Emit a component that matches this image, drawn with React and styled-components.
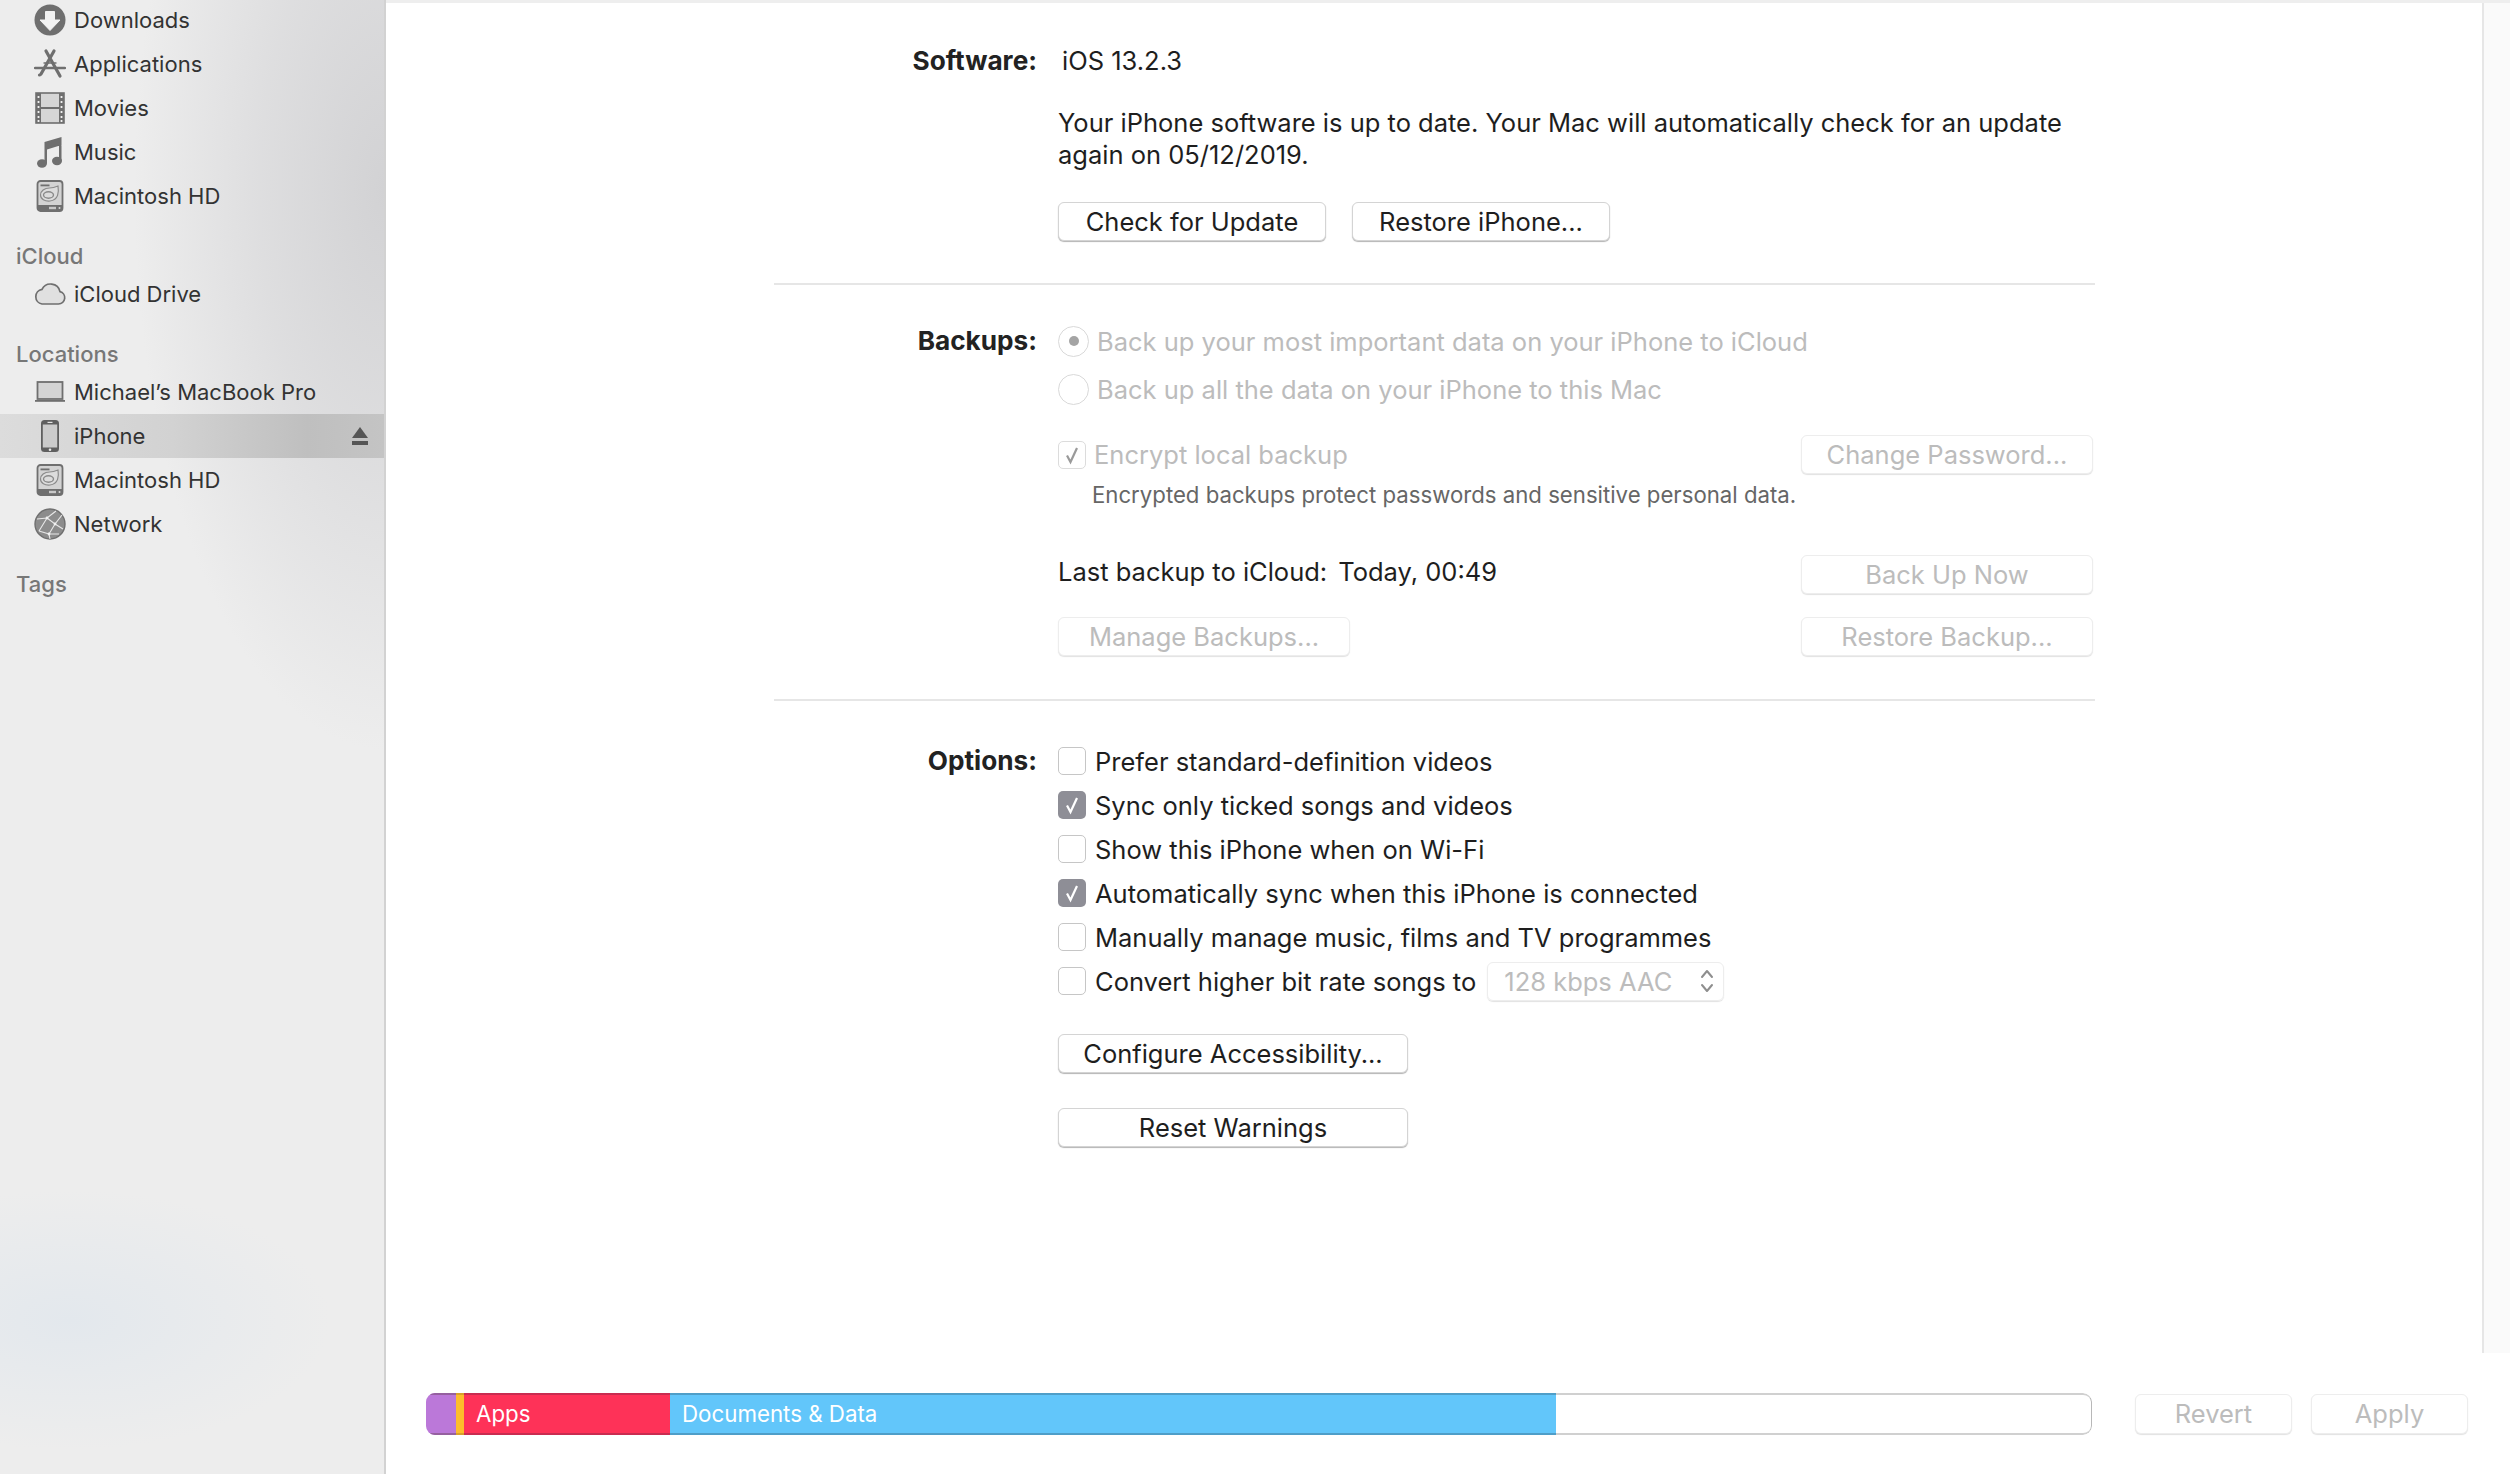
import React from 'react'
import styled, { createGlobalStyle } from 'styled-components'

const INK = '#6f6f6f'

const GlobalStyle = createGlobalStyle`
  html, body {
    margin: 0;
    height: 100%;
    overflow: hidden;
    background: #fff;
    font-family: Inter, "Liberation Sans", sans-serif;
    color: #1e1e1e;
  }
  #root { height: 100%; }
  * { box-sizing: border-box; }
`

const DownloadIcon = () => (
  <svg width="32" height="32" viewBox="0 0 32 32">
    <circle cx="16" cy="16" r="15.5" fill={INK} />
    <path d="M11.5 7.5h9v8.5h5.5L16 26.5 6 16h5.5z" fill="#f2f2f2" stroke="#f2f2f2" strokeLinejoin="round" />
  </svg>
)

const AppsIcon = () => (
  <svg width="32" height="32" viewBox="0 0 32 32" fill="none" stroke={INK} strokeLinecap="round">
    <path d="M20 3 7 26M12 3l14 25" strokeWidth="3.2" />
    <path d="M1 20h30" strokeWidth="2.4" />
    <path d="M10 15h12" strokeWidth="1.4" />
    <circle cx="5.5" cy="27" r="1.6" fill={INK} stroke="none" />
  </svg>
)

const MovieIcon = () => (
  <svg width="32" height="32" viewBox="0 0 32 32">
    <rect x="2" y="1" width="28" height="30" fill="#d6d6d6" stroke={INK} strokeWidth="1.6" />
    <rect x="2" y="1" width="5" height="30" fill={INK} />
    <rect x="25" y="1" width="5" height="30" fill={INK} />
    <rect x="7" y="15" width="18" height="2" fill={INK} />
    {[4, 9, 14, 19, 24, 28].map(y => (
      <g key={y} fill="#f0f0f0">
        <rect x="3.6" y={y} width="1.8" height="2" />
        <rect x="26.6" y={y} width="1.8" height="2" />
      </g>
    ))}
  </svg>
)

const MusicIcon = () => (
  <svg width="32" height="32" viewBox="0 0 32 32" fill={INK}>
    <path d="M10.5 6 27.5 1V9L13 13.5V27h-2.500zM25 8h2.500v17H25z" />
    <ellipse cx="8" cy="27.5" rx="5" ry="4.200" />
    <ellipse cx="23" cy="25" rx="5" ry="4.200" />
  </svg>
)

const DiskIcon = () => (
  <svg width="32" height="32" viewBox="0 0 32 32">
    <rect x="3.5" y="1" width="25" height="30" rx="3" fill="#d3d3d3" stroke={INK} strokeWidth="1.8" />
    <path d="M3.5 25h25v3a3 3 0 0 1-3 3h-19a3 3 0 0 1-3-3z" fill={INK} />
    <rect x="6.5" y="4.5" width="9" height="1.8" fill={INK} />
    <path d="M24 6c1 6 .5 14-8 15-5 .6-9.500-2-9.500-6s4-7 9-7c3 0 5-.5 8.500-2z" fill="#dcdcdc" stroke="#8a8a8a" strokeWidth="1.2" />
    <ellipse cx="14.500" cy="15" rx="5" ry="3.200" fill="none" stroke="#8a8a8a" strokeWidth="1.4" />
    <rect x="15" y="26.800" width="7" height="2.400" fill="#c8c8c8" />
    <circle cx="25.500" cy="28" r="1" fill="#d8d8d8" />
  </svg>
)

const CloudIcon = () => (
  <svg width="32" height="32" viewBox="0 0 32 32">
    <path d="M8 26h16.500a6.300 6.300 0 0 0 1.500-12.400 9.600 9.600 0 0 0-18-2.200A7.400 7.400 0 0 0 8 26z" fill="#e0e0e0" stroke={INK} strokeWidth="1.700" />
  </svg>
)

const LaptopIcon = () => (
  <svg width="32" height="32" viewBox="0 0 32 32">
    <rect x="3.500" y="6" width="25" height="17" fill="#d4d4d4" stroke={INK} strokeWidth="1.800" />
    <rect x="1" y="24" width="30" height="1.800" fill={INK} />
  </svg>
)

const PhoneIcon = () => (
  <svg width="32" height="32" viewBox="0 0 32 32">
    <rect x="7" y="0" width="18" height="32" rx="3.500" fill="#5f5f5f" />
    <rect x="8.800" y="4.500" width="14.400" height="23" fill="#cbcbcb" />
    <rect x="13.500" y="1.800" width="5" height="1.200" fill="#e4e4e4" />
    <circle cx="16" cy="29.800" r="1.300" fill="#e8e8e8" />
  </svg>
)

const NetworkIcon = () => (
  <svg width="32" height="32" viewBox="0 0 32 32">
    <circle cx="16" cy="16" r="15" fill="#8c8c8c" stroke={INK} strokeWidth="1.400" />
    <g fill="none" stroke="#e8e8e8" strokeWidth="1.100">
      <path d="M3 11l10-1 9-7M13 10l-8 13M13 10l8 6 7-9M21 16l-6 10 1 5M15 26l-10-3M21 16l8 5M15 26l10 0" />
    </g>
    <g fill="#f0f0f0">
      <circle cx="13" cy="10" r="1.400" />
      <circle cx="21" cy="16" r="1.400" />
      <circle cx="15" cy="26" r="1.400" />
    </g>
  </svg>
)

const EjectIcon = () => (
  <svg width="16" height="18" viewBox="0 0 16 18" fill="#555">
    <path d="M8 0l8 11H0z" />
    <rect x="0" y="14" width="16" height="4" />
  </svg>
)

const CheckMark = ({ color }) => (
  <svg width="28" height="28" viewBox="0 0 28 28" fill="none">
    <path d="M9 14.500l3.500 6.500L19 7" stroke={color} strokeWidth="2.200" />
  </svg>
)

const UpDownIcon = () => (
  <svg width="14" height="26" viewBox="0 0 14 26" fill="none" stroke="#8e8e8e" strokeWidth="2" strokeLinecap="round" strokeLinejoin="round">
    <path d="M2 9l5-6 5 6M2 17l5 6 5-6" />
  </svg>
)

const favourites = [
  ['Downloads', DownloadIcon],
  ['Applications', AppsIcon],
  ['Movies', MovieIcon],
  ['Music', MusicIcon],
  ['Macintosh HD', DiskIcon]
]

const locations = [
  ['Michael’s MacBook Pro', LaptopIcon],
  ['iPhone', PhoneIcon, true],
  ['Macintosh HD', DiskIcon],
  ['Network', NetworkIcon]
]

const options = [
  ['Prefer standard-definition videos', false],
  ['Sync only ticked songs and videos', true],
  ['Show this iPhone when on Wi-Fi', false],
  ['Automatically sync when this iPhone is connected', true],
  ['Manually manage music, films and TV programmes', false]
]

const SidebarRow = ({ item }) => {
  const [name, Icon, active] = item
  return (
    <SideRow $active={active}>
      <Icon />
      <SideName>{name}</SideName>
      {active && <EjectSlot><EjectIcon /></EjectSlot>}
    </SideRow>
  )
}

const App = () => (
  <Window>
    <GlobalStyle />
    <Sidebar>
      <SideList>
        {favourites.map(item => <SidebarRow key={item[0]} item={item} />)}
      </SideList>
      <SideHeading>iCloud</SideHeading>
      <SidebarRow item={['iCloud Drive', CloudIcon]} />
      <SideHeading>Locations</SideHeading>
      {locations.map(item => <SidebarRow key={item[0]} item={item} />)}
      <SideHeading>Tags</SideHeading>
    </Sidebar>

    <Main>
      <ScrollArea>
        <Content>
          <Section $top={38} $bottom={42}>
            <Label $height={40}>Software:</Label>
            <div>
              <Version>iOS 13.2.3</Version>
              <Paragraph>
                Your iPhone software is up to date. Your Mac will automatically check for an update<br />
                again on 05/12/2019.
              </Paragraph>
              <ButtonRow>
                <Button $width={268}>Check for Update</Button>
                <Button $width={258}>Restore iPhone...</Button>
              </ButtonRow>
            </div>
          </Section>

          <Divider />

          <Section $top={40} $bottom={43}>
            <Label $height={32}>Backups:</Label>
            <div>
              <RadioRow>
                <Radio $on />
                <Muted>Back up your most important data on your iPhone to iCloud</Muted>
              </RadioRow>
              <RadioRow>
                <Radio />
                <Muted>Back up all the data on your iPhone to this Mac</Muted>
              </RadioRow>
              <SplitRow $top={30}>
                <CheckLine>
                  <Box $disabled><CheckMark color="#9a9a9a" /></Box>
                  <Muted>Encrypt local backup</Muted>
                </CheckLine>
                <Button $width={292} disabled>Change Password...</Button>
              </SplitRow>
              <Note>Encrypted backups protect passwords and sensitive personal data.</Note>
              <SplitRow $top={47}>
                <LastBackup>
                  <span>Last backup to iCloud:</span>
                  <span>Today, 00:49</span>
                </LastBackup>
                <Button $width={292} disabled>Back Up Now</Button>
              </SplitRow>
              <SplitRow $top={23}>
                <Button $width={292} disabled>Manage Backups...</Button>
                <Button $width={292} disabled>Restore Backup...</Button>
              </SplitRow>
            </div>
          </Section>

          <Divider />

          <Section $top={38} $bottom={0}>
            <Label $height={44}>Options:</Label>
            <div>
              {options.map(([text, on]) => (
                <OptionRow key={text}>
                  <Box $on={on}>{on && <CheckMark color="#fff" />}</Box>
                  <span>{text}</span>
                </OptionRow>
              ))}
              <OptionRow>
                <Box />
                <span>Convert higher bit rate songs to</span>
                <Select>
                  <span>128 kbps AAC</span>
                  <UpDownIcon />
                </Select>
              </OptionRow>
              <Stacked $top={31}><Button $width={350}>Configure Accessibility...</Button></Stacked>
              <Stacked $top={35}><Button $width={350}>Reset Warnings</Button></Stacked>
            </div>
          </Section>
        </Content>
        <ScrollTrack />
      </ScrollArea>

      <Footer>
        <StorageBar>
          <Segment $width={30} $bg="#bb78d9" $edge="#95609f" />
          <Segment $width={8} $bg="#fdbd2b" $edge="#d9a12a" />
          <Segment $width={206} $bg="#fe3258" $edge="#c92c50"><SegmentName>Apps</SegmentName></Segment>
          <Segment $width={886} $bg="#62c6fa" $edge="#4f9ec8"><SegmentName>Documents &amp; Data</SegmentName></Segment>
          <FreeSpace />
        </StorageBar>
        <FooterButtons>
          <Button $width={157} $height={40} disabled>Revert</Button>
          <Button $width={157} $height={40} disabled>Apply</Button>
        </FooterButtons>
      </Footer>
    </Main>
  </Window>
)

const Window = styled.div`
  display: flex;
  height: 100%;
`

const Sidebar = styled.aside`
  flex: 0 0 386px;
  height: 100%;
  border-right: 2px solid #d2d2d2;
  background:
    radial-gradient(ellipse 250px 560px at 384px 190px, #d2d2d4 0%, rgba(214, 214, 216, 0.65) 50%, rgba(236, 236, 236, 0) 100%),
    radial-gradient(ellipse 260px 130px at 70px 1320px, #e3e8ed 0%, rgba(236, 236, 236, 0) 100%),
    #ededed;
`

const SideList = styled.div`
  margin-top: -2px;
`

const SideRow = styled.div`
  display: flex;
  align-items: center;
  gap: 8px;
  height: 44px;
  padding-left: 34px;
  background: ${p => p.$active
    ? 'linear-gradient(90deg, #dcdcdc 0%, #d2d2d2 45%, #bfbfbf 80%, #c4c4c4 100%)'
    : 'transparent'};
`

const SideName = styled.span`
  font-size: 22px;
  color: #333;
`

const EjectSlot = styled.span`
  display: flex;
  margin-left: auto;
  padding-right: 16px;
`

const SideHeading = styled.div`
  height: 32px;
  margin-top: 22px;
  padding-left: 16px;
  font-size: 22px;
  font-weight: 500;
  line-height: 32px;
  color: #777;
`

const Main = styled.main`
  display: flex;
  flex: 1;
  flex-direction: column;
  min-width: 0;
`

const ScrollArea = styled.div`
  display: flex;
  flex: 0 0 1353px;
  border-top: 3px solid #eee;
`

const Content = styled.div`
  flex: 1;
  padding-left: 388px;
  font-size: 25.5px;
`

const ScrollTrack = styled.div`
  flex: 0 0 28px;
  border-left: 2px solid #e6e6e6;
  background: #fafafa;
`

const Section = styled.section`
  display: grid;
  grid-template-columns: 263px 1036px;
  column-gap: 21px;
  align-items: start;
  padding: ${p => p.$top}px 0 ${p => p.$bottom}px;
`

const Label = styled.div`
  font-size: 26.2px;
  font-weight: 700;
  text-align: right;
  line-height: ${p => p.$height}px;
  color: #222;
`

const Version = styled.div`
  padding-left: 4px;
  line-height: 40px;
`

const Paragraph = styled.p`
  margin: 26px 0 0;
  line-height: 32px;
`

const ButtonRow = styled.div`
  display: flex;
  gap: 26px;
  margin-top: 31px;
`

const Button = styled.button`
  width: ${p => p.$width}px;
  height: ${p => p.$height || 39}px;
  padding: 0 0 1px;
  border: 1px solid ${p => (p.disabled ? '#ededed' : '#d4d4d4')};
  border-radius: 6px;
  background: #fff;
  box-shadow: 0 1px 1px ${p => (p.disabled ? '#e2e2e2' : '#b4b4b4')};
  font: inherit;
  font-size: 25.5px;
  color: ${p => (p.disabled ? '#bcbcbc' : '#1e1e1e')};
`

const Divider = styled.hr`
  width: 1321px;
  height: 2px;
  margin: 0;
  border: 0;
  background: #e6e6e6;
`

const RadioRow = styled.div`
  display: flex;
  align-items: center;
  gap: 8px;
  height: 32px;
  margin-bottom: 16px;
`

const Radio = styled.span`
  display: flex;
  flex: 0 0 31px;
  align-items: center;
  justify-content: center;
  height: 31px;
  border: 1px solid #d9d9d9;
  border-radius: 50%;
  background: #fff;

  &::after {
    content: '';
    display: ${p => (p.$on ? 'block' : 'none')};
    width: 10px;
    height: 10px;
    border-radius: 50%;
    background: #a4a4a4;
  }
`

const Muted = styled.span`
  color: #bcbcbc;
`

const SplitRow = styled.div`
  display: flex;
  align-items: center;
  justify-content: space-between;
  width: 1035px;
  margin-top: ${p => p.$top}px;
`

const CheckLine = styled.div`
  display: flex;
  align-items: center;
  gap: 8px;
`

const Box = styled.span`
  display: block;
  flex: 0 0 28px;
  height: 28px;
  border: ${p => (p.$on ? '0' : `1px solid ${p.$disabled ? '#dcdcdc' : '#c6c6c6'}`)};
  border-radius: 5px;
  background: ${p => (p.$on ? '#8e8e96' : '#fff')};

  svg {
    display: block;
    margin: ${p => (p.$on ? '0' : '-1px')};
  }
`

const Note = styled.div`
  margin-top: 8px;
  padding-left: 34px;
  font-size: 22.2px;
  line-height: 26px;
  color: #666;
`

const LastBackup = styled.div`
  display: flex;
  gap: 11px;
  margin-top: -7px;
`

const OptionRow = styled.div`
  display: flex;
  align-items: center;
  gap: 9px;
  height: 44px;
`

const Select = styled.div`
  display: flex;
  flex: 0 0 237px;
  align-items: center;
  justify-content: space-between;
  height: 39px;
  margin-left: 2px;
  padding: 0 9px 0 16px;
  border: 1px solid #ededed;
  border-radius: 6px;
  box-shadow: 0 1px 1px #e2e2e2;
  color: #bcbcbc;
`

const Stacked = styled.div`
  margin-top: ${p => p.$top}px;
`

const Footer = styled.footer`
  display: flex;
  flex: 1;
  align-items: flex-start;
  justify-content: space-between;
  padding: 40px 42px 0 40px;
`

const StorageBar = styled.div`
  display: flex;
  width: 1666px;
  height: 42px;
  border-radius: 9px;
  overflow: hidden;
`

const Segment = styled.div`
  flex: 0 0 ${p => p.$width}px;
  border-top: 2px solid ${p => p.$edge};
  border-bottom: 2px solid ${p => p.$edge};
  background: ${p => p.$bg};
  color: #fff;
`

const SegmentName = styled.span`
  display: block;
  padding-left: 12px;
  font-size: 22.3px;
  line-height: 37px;
`

const FreeSpace = styled.div`
  flex: 1;
  border: 2px solid #d0d0d0;
  border-left: 0;
  border-right-width: 1px;
  border-right-color: #b8b8b8;
  border-radius: 0 9px 9px 0;
`

const FooterButtons = styled.div`
  display: flex;
  gap: 19px;
  margin-top: 1px;
`

export default App
